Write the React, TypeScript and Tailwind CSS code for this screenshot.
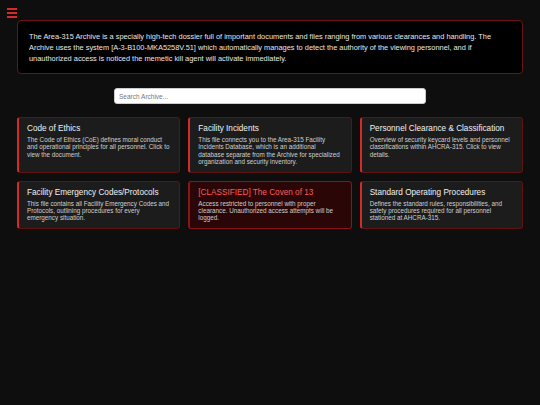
import React from 'react';

interface ArchiveCard {
  title: string;
  text: string;
  classified?: boolean;
}

const cards: ArchiveCard[] = [
  {
    title: 'Code of Ethics',
    text: 'The Code of Ethics (CoE) defines moral conduct and operational principles for all personnel. Click to view the document.',
  },
  {
    title: 'Facility Incidents',
    text: 'This file connects you to the Area-315 Facility Incidents Database, which is an additional database separate from the Archive for specialized organization and security inventory.',
  },
  {
    title: 'Personnel Clearance & Classification',
    text: 'Overview of security keycard levels and personnel classifications within AHCRA-315. Click to view details.',
  },
  {
    title: 'Facility Emergency Codes/Protocols',
    text: 'This file contains all Facility Emergency Codes and Protocols, outlining procedures for every emergency situation.',
  },
  {
    title: '[CLASSIFIED] The Coven of 13',
    text: 'Access restricted to personnel with proper clearance. Unauthorized access attempts will be logged.',
    classified: true,
  },
  {
    title: 'Standard Operating Procedures',
    text: 'Defines the standard rules, responsibilities, and safety procedures required for all personnel stationed at AHCRA-315.',
  },
];

const App: React.FC = () => {
  return (
    <div className="min-h-[405px] w-[540px] bg-[#0e0e0e] font-['Liberation_Sans',Arial,sans-serif] text-white">
      {/* Menu button */}
      <div className="h-[20px] px-[7px] pt-[8px]">
        <button className="flex flex-col gap-[2px]" title="Menu">
          <span className="block h-[2px] w-[10px] bg-[#d42a2a]" />
          <span className="block h-[2px] w-[10px] bg-[#d42a2a]" />
          <span className="block h-[2px] w-[10px] bg-[#d42a2a]" />
        </button>
      </div>

      <div className="px-[17px]">
        {/* Intro */}
        <div className="rounded-[4px] border border-[#6b1414] bg-black px-[11px] pb-[9px] pt-[10px] text-[7.4px] leading-[11px] text-[#e8e8e8]">
          The Area-315 Archive is a specially high-tech dossier full of important documents and files ranging from various
          clearances and handling. The Archive uses the system [A-3-B100-MKA5258V.51] which automatically manages to detect
          the authority of the viewing personnel, and if unauthorized access is noticed the memetic kill agent will activate
          immediately.
        </div>

        {/* Search */}
        <div className="mt-[14px] flex justify-center">
          <input
            type="text"
            placeholder="Search Archive..."
            className="h-[16px] w-[312px] rounded-[3px] border border-[#cccccc] bg-white px-[4px] text-[6.5px] text-black placeholder:text-[#777777] focus:outline-none"
          />
        </div>

        {/* Cards */}
        <div className="mt-[13px] grid grid-cols-3 gap-x-[8px] gap-y-[8px]">
          {cards.map((card) => (
            <div
              key={card.title}
              className={`rounded-[3px] border border-l-2 px-[8px] pb-[6px] pt-[5px] ${
                card.classified
                  ? 'border-[#8a1515] border-l-[#8a1515] bg-[#2a0606]'
                  : 'border-[#5e1212] border-l-[#d42a2a] bg-[#1c1c1c]'
              }`}
            >
              <h3
                className={`text-[8.2px] leading-[11px] ${card.classified ? 'text-[#ff5a5a]' : 'text-[#f2f2f2]'}`}
              >
                {card.title}
              </h3>
              <p className="mt-[2px] text-[6.3px] leading-[7.4px] text-[#d0d0d0]">{card.text}</p>
            </div>
          ))}
        </div>
      </div>
    </div>
  );
};

export default App;
